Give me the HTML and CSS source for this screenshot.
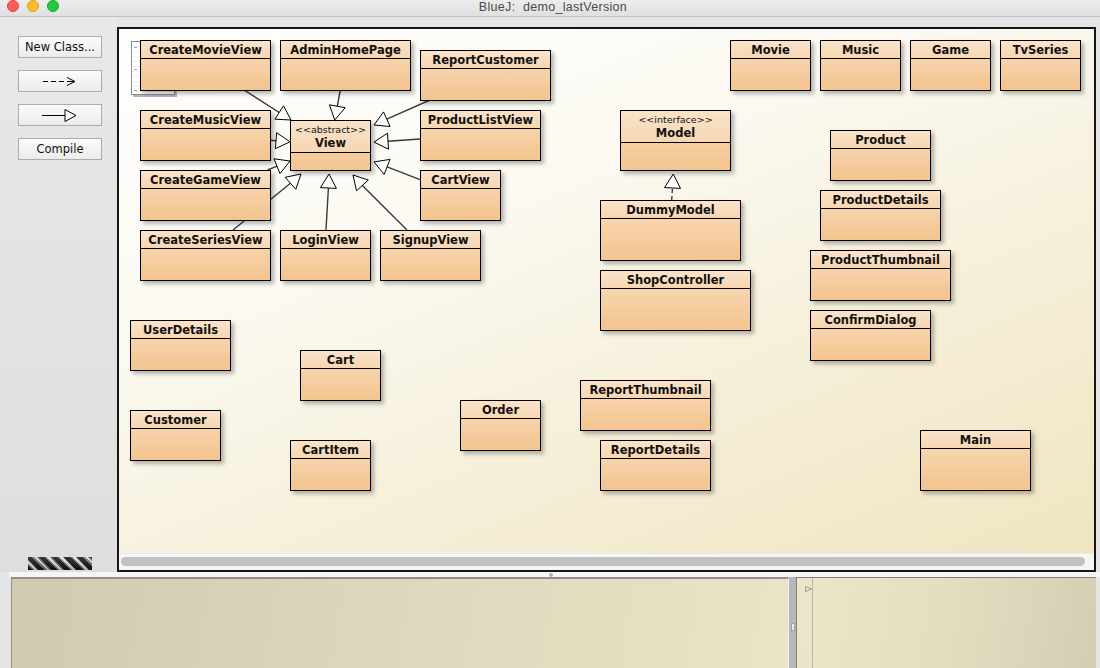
FILE: index.html
```html
<!DOCTYPE html>
<html>
<head>
<meta charset="utf-8">
<title>BlueJ: demo_lastVersion</title>
<link rel="stylesheet" href="styles.css">
</head>
<body>
<div class="window">
  <div class="titlebar">
    <div class="lights"><span class="light red"></span><span class="light yellow"></span><span class="light green"></span></div>
    <div class="title">BlueJ:&nbsp; demo_lastVersion</div>
    <div></div>
  </div>
  <div class="main">
    <div class="sidebar">
      <button class="btn">New Class...</button>
      <button class="btn"><svg width="36" height="12" viewBox="0 0 36 12"><path d="M1 6.5h5M9 6.5h5M17 6.5h5M25 6.5h8" stroke="#000" stroke-width="1" fill="none"/><path d="M25 2.5l8 4-8 4" stroke="#000" stroke-width="1" fill="none"/></svg></button>
      <button class="btn"><svg width="38" height="14" viewBox="0 0 38 14"><path d="M1 7.5h23" stroke="#000" stroke-width="1"/><path d="M24 1.5l11 6-11 6z" stroke="#000" stroke-width="1" fill="#fff"/></svg></button>
      <button class="btn">Compile</button>
      <div class="progress"></div>
    </div>
    <div class="canvas">
      <div class="diagram">
        <svg class="links" width="975" height="524" viewBox="119 29 975 524">
          <g class="edge">
            <line x1="244" y1="90" x2="279.2" y2="112.5"/>
            <line x1="340.3" y1="90" x2="337.3" y2="106.2"/>
            <line x1="430" y1="100" x2="386.8" y2="119.2"/>
            <line x1="270" y1="140.2" x2="276" y2="140.7"/>
            <line x1="420" y1="139" x2="388" y2="141.2"/>
            <line x1="267.5" y1="170" x2="277" y2="166.2"/>
            <line x1="420" y1="179.6" x2="387.1" y2="166.9"/>
            <line x1="233" y1="230" x2="290.5" y2="183.3"/>
            <line x1="326" y1="230" x2="328.4" y2="188"/>
            <line x1="407" y1="230" x2="362.4" y2="185.4"/>
            <line class="dash" x1="671.7" y1="200" x2="672.5" y2="188"/>
          </g>
          <g class="head">
            <polygon points="291,120 274.9,119.2 283.5,105.8"/>
            <polygon points="334.7,120 329.4,104.8 345.2,107.7"/>
            <polygon points="374,125 383.5,111.9 390.1,126.5"/>
            <polygon points="290,141.8 275.4,148.7 276.6,132.7"/>
            <polygon points="374,142.1 387.5,133.2 388.5,149.2"/>
            <polygon points="290,161 280,173.6 274,158.8"/>
            <polygon points="374,161.9 390,159.4 384.2,174.4"/>
            <polygon points="301,174 295.8,189.3 285.2,177.3"/>
            <polygon points="329,174 336.4,188.4 320.4,187.6"/>
            <polygon points="353,175 368.3,180 356.5,190.8"/>
            <polygon points="673.3,174 680.5,188.4 664.5,187.6"/>
          </g>
        </svg>
        <div class="readme"><span class="mark"></span><span class="mark"></span><span class="mark"></span></div>

        <div class="cls c-createmovie"><div class="hd">CreateMovieView</div></div>
        <div class="cls c-adminhome"><div class="hd">AdminHomePage</div></div>
        <div class="cls c-reportcustomer"><div class="hd">ReportCustomer</div></div>
        <div class="cls c-createmusic"><div class="hd">CreateMusicView</div></div>
        <div class="cls c-view"><div class="hd stereo"><div class="st">&lt;&lt;abstract&gt;&gt;</div><div class="nm">View</div></div></div>
        <div class="cls c-productlist"><div class="hd">ProductListView</div></div>
        <div class="cls c-creategame"><div class="hd">CreateGameView</div></div>
        <div class="cls c-cartview"><div class="hd">CartView</div></div>
        <div class="cls c-createseries"><div class="hd">CreateSeriesView</div></div>
        <div class="cls c-login"><div class="hd">LoginView</div></div>
        <div class="cls c-signup"><div class="hd">SignupView</div></div>
        <div class="cls c-model"><div class="hd stereo"><div class="st">&lt;&lt;interface&gt;&gt;</div><div class="nm">Model</div></div></div>
        <div class="cls c-dummymodel"><div class="hd">DummyModel</div></div>
        <div class="cls c-shopcontroller"><div class="hd">ShopController</div></div>
        <div class="cls c-movie"><div class="hd">Movie</div></div>
        <div class="cls c-music"><div class="hd">Music</div></div>
        <div class="cls c-game"><div class="hd">Game</div></div>
        <div class="cls c-tvseries"><div class="hd">TvSeries</div></div>
        <div class="cls c-product"><div class="hd">Product</div></div>
        <div class="cls c-productdetails"><div class="hd">ProductDetails</div></div>
        <div class="cls c-productthumb"><div class="hd">ProductThumbnail</div></div>
        <div class="cls c-confirm"><div class="hd">ConfirmDialog</div></div>
        <div class="cls c-userdetails"><div class="hd">UserDetails</div></div>
        <div class="cls c-cart"><div class="hd">Cart</div></div>
        <div class="cls c-customer"><div class="hd">Customer</div></div>
        <div class="cls c-order"><div class="hd">Order</div></div>
        <div class="cls c-reportthumb"><div class="hd">ReportThumbnail</div></div>
        <div class="cls c-reportdetails"><div class="hd">ReportDetails</div></div>
        <div class="cls c-cartitem"><div class="hd">CartItem</div></div>
        <div class="cls c-main"><div class="hd">Main</div></div>
      </div>
      <div class="hscroll"><div class="thumb"></div></div>
    </div>
  </div>
  <div class="splitbar"><span class="grip"></span></div>
  <div class="bottom">
    <div class="term-left"></div>
    <div class="vsplit"><span class="vgrip"></span></div>
    <div class="term-right">
      <div class="gutter"><svg width="7" height="6" viewBox="0 0 7 6"><path d="M0.5 0.5l6 2.5-6 2.5z" fill="none" stroke="#999" stroke-width="1"/></svg></div>
      <div class="term-area"></div>
    </div>
  </div>
</div>
</body>
</html>
```
FILE: styles.css
```css
html, body {
  margin: 0;
  padding: 0;
}
body {
  width: 1100px;
  height: 668px;
  overflow: hidden;
  font-family: "DejaVu Sans", sans-serif;
}
.window {
  width: 1100px;
  height: 668px;
  display: flex;
  flex-direction: column;
  background: #e5e5e5;
}

/* title bar */
.titlebar {
  height: 16px;
  flex: none;
  border-bottom: 1px solid #c4c4c4;
  background: linear-gradient(#ededed, #e0e0e0);
  display: grid;
  grid-template-columns: 1fr auto 1fr;
  align-items: start;
}
.lights {
  display: flex;
  gap: 8px;
  padding-left: 7px;
}
.light {
  width: 12px;
  height: 12px;
  border-radius: 50%;
  box-sizing: border-box;
}
.red { background: #fc5f57; border: 1px solid #e2463f; }
.yellow { background: #fdbc2e; border: 1px solid #e1a116; }
.green { background: #28c840; border: 1px solid #14ae2b; }
.title {
  font-family: "Liberation Sans", sans-serif;
  font-size: 12.5px;
  letter-spacing: 0.3px;
  line-height: 14px;
  color: #4b4b4b;
  padding-left: 6px;
}

/* main area */
.main {
  display: flex;
  height: 555px;
  flex: none;
}
.sidebar {
  width: 117px;
  flex: none;
  display: flex;
  flex-direction: column;
  align-items: flex-start;
  padding: 19px 0 0 18px;
  box-sizing: border-box;
  background: linear-gradient(#e8e8e8, #dedede);
}
.btn {
  width: 84px;
  height: 22px;
  margin: 0 0 12px 0;
  padding: 0;
  border: 1px solid #acacac;
  border-radius: 0;
  background: linear-gradient(#fbfbfb, #ececec);
  font-family: "DejaVu Sans", sans-serif;
  font-size: 11.5px;
  color: #111;
  display: flex;
  align-items: center;
  justify-content: center;
}
.btn svg { display: block; }
.progress {
  margin-top: auto;
  margin-left: 10px;
  margin-bottom: 2px;
  width: 64px;
  height: 13px;
  background:
    linear-gradient(rgba(255,255,255,0.15), rgba(0,0,0,0.25)),
    repeating-linear-gradient(45deg, #151515 0 3px, #777 3px 4.5px, #ececec 4.5px 6.5px, #777 6.5px 7.5px, #151515 7.5px 9px);
}

.canvas {
  margin-top: 10px;
  width: 979px;
  height: 545px;
  box-sizing: border-box;
  border: 2px solid #151515;
  display: flex;
  flex-direction: column;
  flex: none;
}
.diagram {
  position: relative;
  height: 524px;
  flex: none;
  overflow: hidden;
  background: linear-gradient(158deg, #fefefd 0%, #fbf9f1 35%, #f5eed6 70%, #f0e5c2 100%);
}
.links {
  position: absolute;
  left: 0;
  top: 0;
}
.edge line {
  stroke: #3a3a3a;
  stroke-width: 1.4;
}
.edge line.dash {
  stroke-dasharray: 4 3;
}
.head polygon {
  fill: #fff;
  stroke: #000;
  stroke-width: 1;
}

.readme {
  position: absolute;
  left: 12px;
  top: 12px;
  width: 44px;
  height: 54px;
  box-sizing: border-box;
  border: 1px solid #8d8d8d;
  background: repeating-linear-gradient(#fff 0 4px, #eef2f7 4px 5px);
  box-shadow: 2px 2px 0 #b5b5b5;
  display: flex;
  flex-direction: column;
  justify-content: space-between;
  padding: 5px 0 3px 2px;
}
.mark {
  width: 3px;
  height: 1px;
  background: #9aa6b5;
}

/* class boxes */
.cls {
  position: absolute;
  box-sizing: border-box;
  border: 1px solid #000;
  background: linear-gradient(#f8dcbd, #f3c48e);
  box-shadow: 3px 3px 4px rgba(0, 0, 0, 0.28);
}
.hd {
  height: 18px;
  box-sizing: border-box;
  border-bottom: 1px solid #000;
  background: linear-gradient(#fae3ca, #f6d6b3);
  font-weight: bold;
  font-size: 11.5px;
  line-height: 16px;
  padding-top: 1px;
  text-align: center;
  color: #111;
  white-space: nowrap;
}
.hd.stereo {
  height: 32px;
  padding: 3px 0 1px 0;
  line-height: 15px;
}
.st {
  font-weight: normal;
  font-size: 9.5px;
  line-height: 12px;
}
.nm {
  line-height: 15px;
}

.c-createmovie { left: 21px; top: 11px; width: 131px; height: 51px; }
.c-adminhome { left: 161px; top: 11px; width: 131px; height: 51px; }
.c-reportcustomer { left: 301px; top: 21px; width: 131px; height: 51px; }
.c-createmusic { left: 21px; top: 81px; width: 131px; height: 51px; }
.c-view { left: 171px; top: 91px; width: 81px; height: 51px; }
.c-productlist { left: 301px; top: 81px; width: 121px; height: 51px; }
.c-creategame { left: 21px; top: 141px; width: 131px; height: 51px; }
.c-cartview { left: 301px; top: 141px; width: 81px; height: 51px; }
.c-createseries { left: 21px; top: 201px; width: 131px; height: 51px; }
.c-login { left: 161px; top: 201px; width: 91px; height: 51px; }
.c-signup { left: 261px; top: 201px; width: 101px; height: 51px; }
.c-model { left: 501px; top: 81px; width: 111px; height: 61px; }
.c-dummymodel { left: 481px; top: 171px; width: 141px; height: 61px; }
.c-shopcontroller { left: 481px; top: 241px; width: 151px; height: 61px; }
.c-movie { left: 611px; top: 11px; width: 81px; height: 51px; }
.c-music { left: 701px; top: 11px; width: 81px; height: 51px; }
.c-game { left: 791px; top: 11px; width: 81px; height: 51px; }
.c-tvseries { left: 881px; top: 11px; width: 81px; height: 51px; }
.c-product { left: 711px; top: 101px; width: 101px; height: 51px; }
.c-productdetails { left: 701px; top: 161px; width: 121px; height: 51px; }
.c-productthumb { left: 691px; top: 221px; width: 141px; height: 51px; }
.c-confirm { left: 691px; top: 281px; width: 121px; height: 51px; }
.c-userdetails { left: 11px; top: 291px; width: 101px; height: 51px; }
.c-cart { left: 181px; top: 321px; width: 81px; height: 51px; }
.c-customer { left: 11px; top: 381px; width: 91px; height: 51px; }
.c-order { left: 341px; top: 371px; width: 81px; height: 51px; }
.c-reportthumb { left: 461px; top: 351px; width: 131px; height: 51px; }
.c-reportdetails { left: 481px; top: 411px; width: 111px; height: 51px; }
.c-cartitem { left: 171px; top: 411px; width: 81px; height: 51px; }
.c-main { left: 801px; top: 401px; width: 111px; height: 61px; }

.hscroll {
  flex: 1;
  background: #f6f6f6;
  border-top: 1px solid #ececec;
  padding: 3px 9px 0 2px;
}
.thumb {
  height: 9px;
  border-radius: 5px;
  background: #c1c1c1;
}

/* bottom */
.splitbar {
  height: 5px;
  flex: none;
  margin-left: 9px;
  background: #f6f6f6;
  display: flex;
  align-items: center;
  padding-left: 540px;
}
.grip {
  width: 4px;
  height: 4px;
  border-radius: 50%;
  background: #b0b0b0;
}
.bottom {
  flex: 1;
  display: flex;
  padding: 0 4px 0 11px;
}
.term-left {
  width: 778px;
  flex: none;
  box-sizing: border-box;
  border-top: 2px solid #8f8f8f;
  border-left: 1px solid #8f8f8f;
  border-right: 1px solid #f2f2f2;
  background: linear-gradient(100deg, #d0caaf, #e0dabe 60%, #ebe5c7);
}
.vsplit {
  width: 7px;
  flex: none;
  background: #b7b7b7;
  padding-top: 46px;
  box-sizing: border-box;
  display: flex;
  justify-content: center;
  align-items: flex-start;
}
.vgrip {
  width: 4px;
  height: 8px;
  background: #e9e9e9;
  border: 1px solid #a0a0a0;
  box-sizing: border-box;
}
.term-right {
  flex: 1;
  display: flex;
  box-sizing: border-box;
  border-top: 1px solid #7f7f7f;
  border-left: 1px solid #7f7f7f;
  background: linear-gradient(100deg, #ede7ca, #e4dec1 50%, #d3cdb2);
}
.gutter {
  width: 16px;
  flex: none;
  border-right: 1px solid #b5b5b5;
  padding: 8px 0 0 8px;
  box-sizing: border-box;
}
.gutter svg { display: block; }
.term-area { flex: 1; }
```
